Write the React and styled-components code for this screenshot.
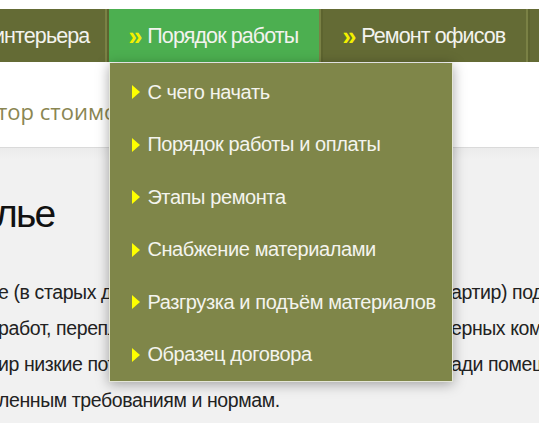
import styled, { createGlobalStyle } from "styled-components";

// Узкого PT Sans Narrow нет — берём Arial-метрику и чуть сжимаем межбуквенный интервал
const sans = `"Liberation Sans", Arial, sans-serif`;

const GlobalStyle = createGlobalStyle`
    html, body {
        margin: 0;
        padding: 0;
        background: #f1f1f1;
        overflow: hidden;
    }
    body {
        font-family: ${sans};
    }
`;

const menuItems = [
    "С чего начать",
    "Порядок работы и оплаты",
    "Этапы ремонта",
    "Снабжение материалами",
    "Разгрузка и подъём материалов",
    "Образец договора",
];

// Строки абзаца: начало слева и хвост справа от выпадающего меню
const paragraph = [
    { head: "е (в старых домах и в новостройках, ремонт кв", tail: "артир) подготовка" },
    { head: "работ, перепланировка с объединением внут", tail: "ерных комнат" },
    { head: "ир низкие потолки и маленькие окна, малые площ", tail: "ади помещений" },
    { head: "ленным требованиям и нормам." },
];

const App = () => {
    return (
        <>
            <GlobalStyle />
            <Page>
                <TopStrip />
                <Nav>
                    <NavItem $first>интерьера</NavItem>
                    <Separator />
                    <NavItem $active>
                        <Chevron>»</Chevron>Порядок работы
                        <Dropdown>
                            {menuItems.map((item) => (
                                <DropdownItem key={item}>
                                    <Arrow />
                                    {item}
                                </DropdownItem>
                            ))}
                        </Dropdown>
                    </NavItem>
                    <Separator />
                    <NavItem>
                        <Chevron>»</Chevron>Ремонт офисов
                    </NavItem>
                    <Separator />
                    <NavItem>
                        <Chevron>»</Chevron>Контакты
                    </NavItem>
                </Nav>
                <Band>
                    <Lead>тор стоимости ремонта квартиры</Lead>
                </Band>
                <Content>
                    <Heading>лье</Heading>
                    <Text>
                        {paragraph.map((line) => (
                            <Line key={line.head}>
                                <LineHead>{line.head}</LineHead>
                                {line.tail && <span>{line.tail}</span>}
                            </Line>
                        ))}
                    </Text>
                </Content>
            </Page>
        </>
    );
};

const Page = styled.div`
    width: 539px;
    height: 423px;
    overflow: hidden;
    display: flex;
    flex-direction: column;
`;

const TopStrip = styled.div`
    height: 9px;
    background: #ffffff;
`;

const Nav = styled.nav`
    display: flex;
    height: 53px;
    background: #646b35;
    white-space: nowrap;
    position: relative;
    z-index: 2;
`;

const NavItem = styled.div`
    position: relative;
    display: flex;
    align-items: center;
    flex-shrink: 0;
    box-sizing: border-box;
    height: 53px;
    padding: ${({ $first }) => ($first ? "2px 16px 0 0" : "2px 21px 0 19px")};
    margin-left: ${({ $first }) => ($first ? "-7px" : "0")};
    background: ${({ $active }) => ($active ? "#4caf50" : "transparent")};
    color: #f3f3ee;
    font-size: 21.5px;
    letter-spacing: -0.9px;
`;

const Chevron = styled.span`
    color: #f2f000;
    font-weight: 700;
    font-size: 25px;
    letter-spacing: 0;
    margin-right: 5px;
`;

const Separator = styled.span`
    flex-shrink: 0;
    width: 4px;
    height: 53px;
    background: linear-gradient(to right, #7a8145 0 60%, #5d642f 60% 100%);
`;

const Dropdown = styled.ul`
    position: absolute;
    top: calc(100% + 1px);
    left: 0;
    width: 342px;
    margin: 0;
    padding: 3px 0 0;
    list-style: none;
    background: #7f8649;
    border: 1px solid #e4e6d8;
    border-top: none;
    box-shadow: 0 2px 12px rgba(0, 0, 0, 0.35);
    letter-spacing: 0;
`;

const DropdownItem = styled.li`
    display: flex;
    align-items: center;
    gap: 7px;
    height: 52.5px;
    padding-left: 22px;
    color: #f4f4ee;
    font-size: 20px;
    letter-spacing: -0.4px;
`;

const Arrow = styled.span`
    width: 0;
    height: 0;
    border-left: 8px solid #ffff00;
    border-top: 7px solid transparent;
    border-bottom: 7px solid transparent;
`;

const Band = styled.div`
    height: 86px;
    background: #ffffff;
    border-bottom: 1px solid #dadada;
    display: flex;
    align-items: center;
    padding-top: 12px;
    box-sizing: border-box;
`;

const Lead = styled.div`
    margin-left: -3px;
    font-family: "Open Sans", "Noto Sans", sans-serif;
    font-size: 22px;
    color: #8a8652;
    white-space: nowrap;
`;

const Content = styled.div`
    flex: 1;
    background: linear-gradient(to bottom, #ebebeb 0, #f1f1f1 12px);
    padding-top: 40px;
`;

const Heading = styled.h1`
    margin: 0 0 0 -5px;
    font-weight: 400;
    font-size: 39px;
    letter-spacing: -1.8px;
    line-height: 52px;
    color: #111111;
`;

const Text = styled.div`
    margin-top: 34px;
    color: #222222;
    font-size: 19.5px;
    letter-spacing: -0.4px;
    line-height: 36px;
`;

const Line = styled.div`
    display: grid;
    grid-template-columns: 453px max-content;
    white-space: nowrap;
    margin-left: -2px;
`;

const LineHead = styled.span`
    overflow: hidden;
`;

export default App;
